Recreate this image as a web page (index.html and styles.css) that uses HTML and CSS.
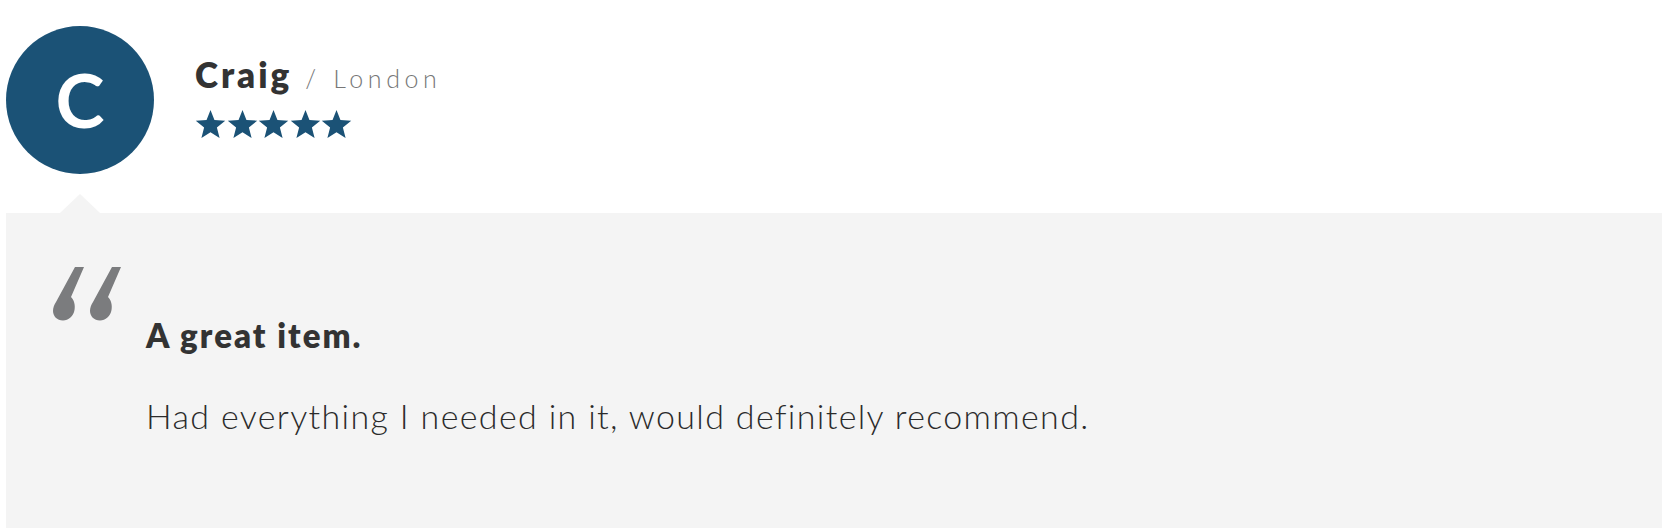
FILE: index.html
```html
<!DOCTYPE html>
<html lang="en">
<head>
<meta charset="utf-8">
<title>Review</title>
<link rel="stylesheet" href="styles.css">
</head>
<body>
<section class="review">
  <header class="review-header">
    <div class="avatar">C</div>
    <div class="meta">
      <div class="name-row">
        <span class="name">Craig</span>
        <span class="slash">/</span>
        <span class="location">London</span>
      </div>
      <div class="stars">
        <svg class="star" viewBox="0 0 24 22"><path d="M12 0L15.06 7.79L23.41 8.29L16.95 13.61L19.05 21.71L12 17.2L4.95 21.71L7.05 13.61L0.59 8.29L8.94 7.79Z"/></svg>
        <svg class="star" viewBox="0 0 24 22"><path d="M12 0L15.06 7.79L23.41 8.29L16.95 13.61L19.05 21.71L12 17.2L4.95 21.71L7.05 13.61L0.59 8.29L8.94 7.79Z"/></svg>
        <svg class="star" viewBox="0 0 24 22"><path d="M12 0L15.06 7.79L23.41 8.29L16.95 13.61L19.05 21.71L12 17.2L4.95 21.71L7.05 13.61L0.59 8.29L8.94 7.79Z"/></svg>
        <svg class="star" viewBox="0 0 24 22"><path d="M12 0L15.06 7.79L23.41 8.29L16.95 13.61L19.05 21.71L12 17.2L4.95 21.71L7.05 13.61L0.59 8.29L8.94 7.79Z"/></svg>
        <svg class="star" viewBox="0 0 24 22"><path d="M12 0L15.06 7.79L23.41 8.29L16.95 13.61L19.05 21.71L12 17.2L4.95 21.71L7.05 13.61L0.59 8.29L8.94 7.79Z"/></svg>
      </div>
    </div>
  </header>
  <div class="bubble">
    <svg class="quote-mark" viewBox="0 0 70 54">
      <path d="M22 0H31L18 30C21 33 22.5 38 21.5 43C20.5 49 15.5 53.5 10 53.5C4 53.5 0 49 0 44C0 41 1 38 3 35Z"/>
      <path transform="translate(37 0)" d="M22 0H31L18 30C21 33 22.5 38 21.5 43C20.5 49 15.5 53.5 10 53.5C4 53.5 0 49 0 44C0 41 1 38 3 35Z"/>
    </svg>
    <div class="bubble-content">
      <h3 class="review-title">A great item.</h3>
      <p class="review-text">Had everything I needed in it, would definitely recommend.</p>
    </div>
  </div>
</section>
</body>
</html>
```

FILE: styles.css
```css
html, body {
  margin: 0;
  padding: 0;
  background: #ffffff;
}

body {
  font-family: "Lato", "Open Sans", sans-serif;
  color: #333333;
  overflow: hidden;
}

.review {
  padding: 26px 0 0 6px;
}

.review-header {
  display: flex;
  align-items: flex-start;
  gap: 41px;
}

.avatar {
  width: 148px;
  height: 148px;
  border-radius: 50%;
  background: #1b5276;
  color: #ffffff;
  display: flex;
  align-items: center;
  justify-content: center;
  font-weight: 700;
  font-size: 74px;
  line-height: 1;
  flex: none;
}

.meta {
  padding-top: 31px;
}

.name-row {
  display: flex;
  align-items: baseline;
  line-height: 1;
}

.name {
  font-size: 35px;
  font-weight: 800;
  letter-spacing: 3px;
  color: #333333;
}

.slash {
  font-size: 25px;
  font-weight: 300;
  color: #777777;
  margin-left: 13px;
  margin-right: 17px;
}

.location {
  font-size: 25px;
  font-weight: 300;
  letter-spacing: 4.6px;
  color: #777777;
}

.stars {
  display: flex;
  gap: 0.6px;
  margin-top: 18px;
}

.star {
  width: 31px;
  height: 28.4px;
  fill: #1b5276;
  display: block;
}

.bubble {
  position: relative;
  margin-top: 39px;
  background: #f4f4f4;
  min-height: 315px;
  box-sizing: border-box;
  padding: 54px 0 0 47px;
}

.bubble::before {
  content: "";
  position: absolute;
  top: -19px;
  left: 54px;
  border-left: 20px solid transparent;
  border-right: 20px solid transparent;
  border-bottom: 19px solid #f4f4f4;
}

.quote-mark {
  display: block;
  width: 70px;
  height: 54px;
  fill: #7b7c7e;
}

.bubble-content {
  margin-left: 93px;
  margin-top: -2px;
}

.review-title {
  margin: 0;
  font-size: 33px;
  font-weight: 800;
  line-height: 1;
  letter-spacing: 2.05px;
  color: #333333;
}

.review-text {
  margin: 47px 0 0 0;
  font-size: 34px;
  font-weight: 300;
  line-height: 1;
  letter-spacing: 1.35px;
  color: #2b2b2b;
}
```
